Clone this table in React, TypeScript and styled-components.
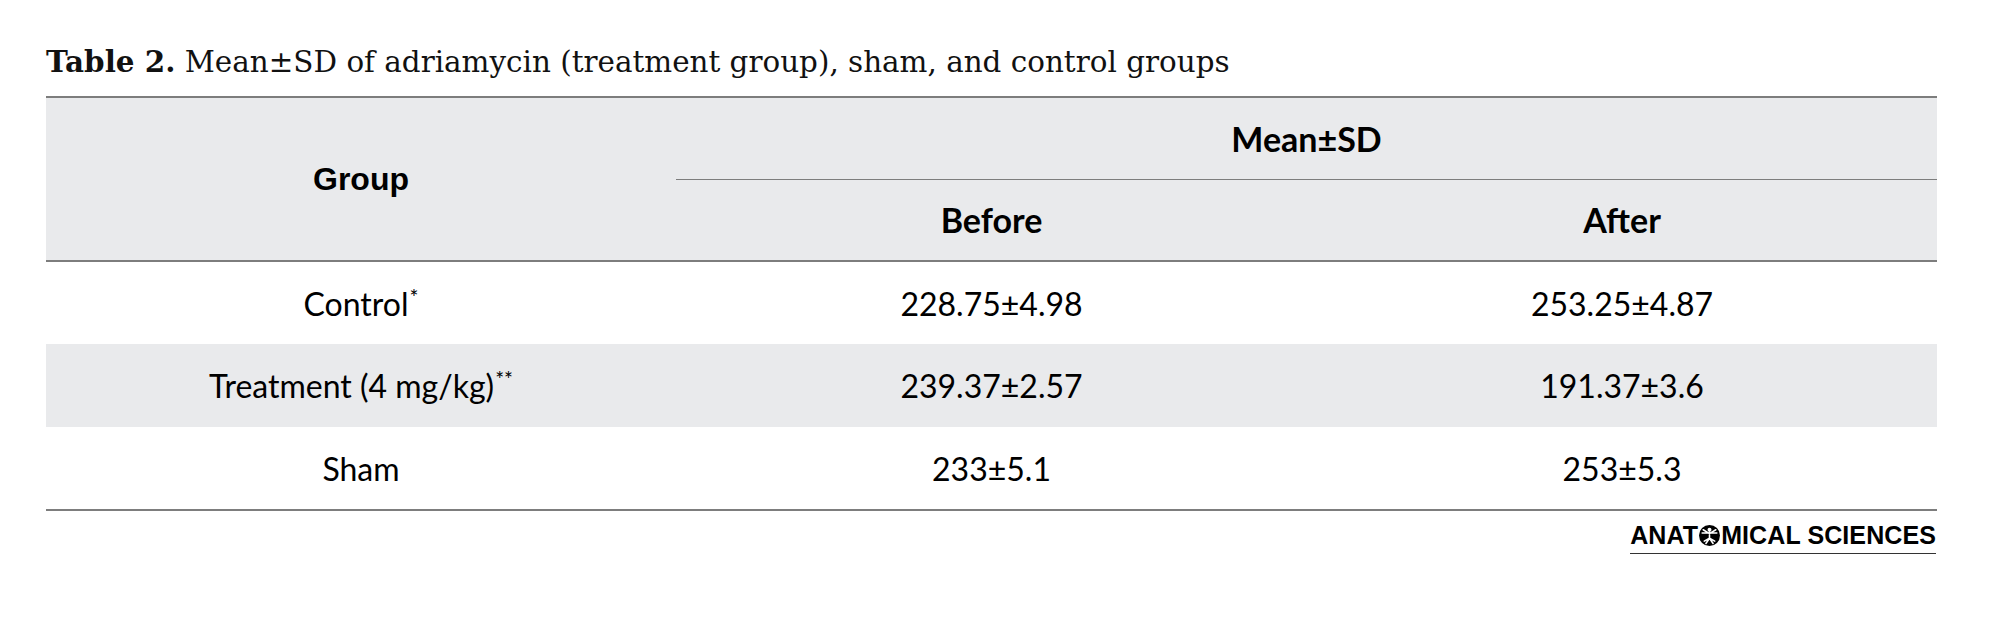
import React from "react";
import styled, { createGlobalStyle } from "styled-components";

const GlobalStyle = createGlobalStyle`
  html, body {
    margin: 0;
    padding: 0;
    background: #ffffff;
  }
  body {
    width: 1990px;
    height: 625px;
    overflow: hidden;
  }
`;

const RULE = "#7d7d7d";
const SHADE = "#e9eaec";

const Page = styled.div`
  padding: 46px 53px 0 46px;
  box-sizing: border-box;
  width: 1990px;
`;

const Caption = styled.div`
  font-family: "DejaVu Serif", "Liberation Serif", serif;
  font-size: 29.4px;
  line-height: 32px;
  color: #111;
  margin-bottom: 18px;
  white-space: nowrap;

  b {
    font-weight: 700;
  }
`;

const Table = styled.table`
  width: 1891px;
  border-collapse: collapse;
  table-layout: fixed;
  border-top: 2px solid ${RULE};
  border-bottom: 2px solid ${RULE};
`;

const HeadRow = styled.tr<{ $h: number }>`
  background: ${SHADE};
  height: ${(p) => p.$h}px;
`;

const HeadCell = styled.th<{ $rule?: boolean; $group?: boolean }>`
  padding: 0;
  text-align: center;
  vertical-align: middle;
  color: #000;
  font-weight: 700;
  font-family: ${(p) =>
    p.$group ? `"Liberation Sans", Arial, sans-serif` : `Lato, "Open Sans", sans-serif`};
  font-size: ${(p) => (p.$group ? 32 : 34)}px;
  border-bottom: ${(p) => (p.$rule ? `1.5px solid ${RULE}` : "none")};
`;

const HeadBody = styled.thead`
  border-bottom: 2px solid ${RULE};
`;

const Row = styled.tr<{ $shade: boolean }>`
  height: 83px;
  background: ${(p) => (p.$shade ? SHADE : "#fff")};
`;

const Cell = styled.td`
  padding: 0;
  text-align: center;
  vertical-align: middle;
  font-family: Lato, "Open Sans", sans-serif;
  font-size: 32px;
  color: #000;

  sup {
    font-size: 21px;
    vertical-align: 11px;
    line-height: 0;
    margin-left: 1px;
  }
`;

const Footer = styled.div`
  display: flex;
  justify-content: flex-end;
  width: 1891px;
  margin-top: 12px;
`;

const Brand = styled.div`
  display: flex;
  align-items: center;
  font-family: "Liberation Sans", Arial, sans-serif;
  font-weight: 700;
  font-size: 25px;
  line-height: 25px;
  letter-spacing: 0.1px;
  color: #000;
  padding-bottom: 5px;
  margin-right: 1px;
  border-bottom: 1px solid #333;
`;

const BrandMark = styled.svg`
  width: 21px;
  height: 21px;
  margin: 0 1px;
`;

const rows = [
  { group: "Control", mark: "*", before: "228.75±4.98", after: "253.25±4.87" },
  { group: "Treatment (4 mg/kg)", mark: "**", before: "239.37±2.57", after: "191.37±3.6" },
  { group: "Sham", mark: "", before: "233±5.1", after: "253±5.3" },
];

const Vitruvian = () => (
  <BrandMark viewBox="0 0 20 20">
    <circle cx="10" cy="10" r="10" fill="#000" />
    <circle cx="10" cy="4.6" r="1.9" fill="#fff" />
    <path
      d="M3 7.6 L17 7.6 M4 4.5 L10 8.2 L16 4.5 M10 6.5 L10 12.6 M10 12.6 L6.6 17.6 M10 12.6 L13.4 17.6 M10 12.6 L5 15.4 M10 12.6 L15 15.4"
      stroke="#fff"
      strokeWidth="1.5"
      strokeLinecap="round"
      fill="none"
    />
  </BrandMark>
);

const App: React.FC = () => {
  return (
    <>
      <GlobalStyle />
      <Page>
        <Caption>
          <b>Table 2.</b> Mean±SD of adriamycin (treatment group), sham, and control groups
        </Caption>
        <Table>
          <colgroup>
            <col style={{ width: 630 }} />
            <col style={{ width: 631 }} />
            <col style={{ width: 630 }} />
          </colgroup>
          <HeadBody>
            <HeadRow $h={82}>
              <HeadCell rowSpan={2} $group>
                Group
              </HeadCell>
              <HeadCell colSpan={2} $rule>
                Mean±SD
              </HeadCell>
            </HeadRow>
            <HeadRow $h={82}>
              <HeadCell>Before</HeadCell>
              <HeadCell>After</HeadCell>
            </HeadRow>
          </HeadBody>
          <tbody>
            {rows.map((r, i) => (
              <Row key={r.group} $shade={i === 1}>
                <Cell>
                  {r.group}
                  {r.mark && <sup>{r.mark}</sup>}
                </Cell>
                <Cell>{r.before}</Cell>
                <Cell>{r.after}</Cell>
              </Row>
            ))}
          </tbody>
        </Table>
        <Footer>
          <Brand>
            ANAT
            <Vitruvian />
            MICAL SCIENCES
          </Brand>
        </Footer>
      </Page>
    </>
  );
};

export default App;
